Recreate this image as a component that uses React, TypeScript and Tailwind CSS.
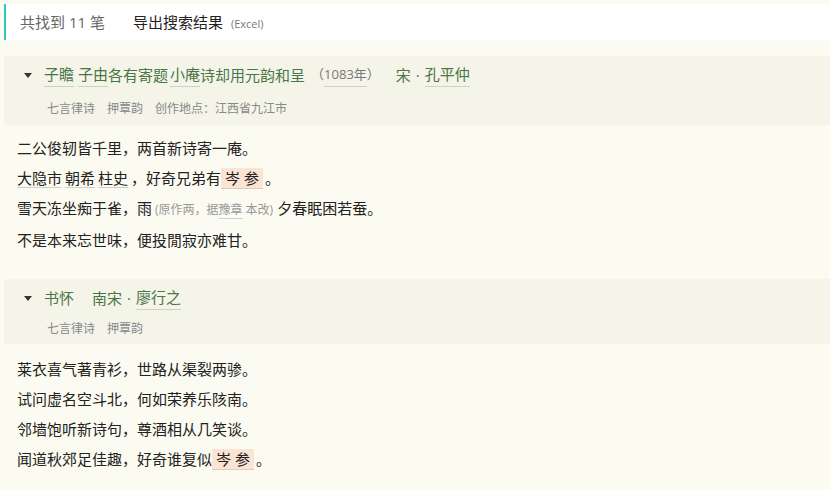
const Tri = () => (
  <svg width="8" height="5" viewBox="0 0 8 5" className="mr-[12px] shrink-0">
    <path d="M0 0 L8 0 L4 5 Z" fill="#333" />
  </svg>
);

const TLink = ({ children, className = "" }: { children: React.ReactNode; className?: string }) => (
  <span className={"inline-block border-b border-[#cfcfc4] leading-[23px] " + className}>{children}</span>
);

const BLink = ({ children }: { children: React.ReactNode }) => (
  <span className="mr-[3px] inline-block border-b border-[#cfcfc4] leading-[17px]">{children}</span>
);

const Hl = ({ children }: { children: React.ReactNode }) => (
  <span className="mr-[2px] inline-block border-b border-[#e6c9b5] bg-[#fbe4d4] px-1 leading-[20px]">{children}</span>
);

export default function App() {
  return (
    <div className="min-h-[490px] bg-[#fbfbf1] pl-1 pt-1 font-['Open_Sans','Noto_Sans_CJK_SC',sans-serif]">
      <div className="flex h-9 items-center border-l-2 border-[#35c3c3] bg-white pl-[14px]">
        <span className="text-[15px] text-[#666]">共找到 11 笔</span>
        <span className="ml-[28px] text-[15px] text-[#222]">导出搜索结果</span>
        <span className="ml-2 mt-1 text-[11px] text-[#777]">(Excel)</span>
      </div>

      <div className="mt-4 bg-[#f4f4e9] pb-[6px] pl-5 pt-[7px]">
        <div className="flex h-6 items-center text-[15px] text-[#4a7546]">
          <Tri />
          <TLink>子瞻</TLink>
          <TLink className="ml-1">子由</TLink>
          <span>各有寄题</span>
          <TLink className="ml-[2px]">小庵</TLink>
          <span>诗却用元韵和呈</span>
          <span className="ml-[6px] text-[13px] text-[#777]">
            （<TLink>1083年</TLink>）
          </span>
          <span className="ml-[16px]">宋</span>
          <span className="mx-[5px]">·</span>
          <TLink>孔平仲</TLink>
        </div>
        <div className="mt-3 flex h-5 items-center gap-3 pl-[23px] text-[12px] text-[#888]">
          <span>七言律诗</span>
          <span>押覃韵</span>
          <span>创作地点：江西省九江市</span>
        </div>
      </div>

      <div className="pb-[10px] pl-[13px] pt-[8px] text-[15px] leading-[30px] text-[#222]">
        <div>二公俊轫皆千里，两首新诗寄一庵。</div>
        <div>
          <BLink>大隐市</BLink>
          <BLink>朝希</BLink>
          <BLink>柱史</BLink>，好奇兄弟有<Hl>岑 参</Hl>。
        </div>
        <div>
          雪天冻坐痴于雀，雨
          <span className="ml-[3px] mr-[4px] text-[12px] text-[#999]">
            (原作两，据<BLink>豫章</BLink>本改)
          </span>
          夕春眠困若蚕。
        </div>
        <div>不是本来忘世味，便投閒寂亦难甘。</div>
      </div>

      <div className="mt-[14px] bg-[#f4f4e9] pb-[5px] pl-5 pt-[7px]">
        <div className="flex h-6 items-center text-[15px] text-[#4a7546]">
          <Tri />
          <span>书怀</span>
          <span className="ml-[18px]">南宋</span>
          <span className="mx-[5px]">·</span>
          <TLink>廖行之</TLink>
        </div>
        <div className="mt-[9px] flex h-5 items-center gap-3 pl-[23px] text-[12px] text-[#888]">
          <span>七言律诗</span>
          <span>押覃韵</span>
        </div>
      </div>

      <div className="pb-[10px] pl-[13px] pt-[10px] text-[15px] leading-[30px] text-[#222]">
        <div>莱衣喜气著青衫，世路从渠裂两骖。</div>
        <div>试问虚名空斗北，何如荣养乐陔南。</div>
        <div>邻墙饱听新诗句，尊酒相从几笑谈。</div>
        <div>
          闻道秋郊足佳趣，好奇谁复似<Hl>岑 参</Hl>。
        </div>
      </div>
    </div>
  );
}
